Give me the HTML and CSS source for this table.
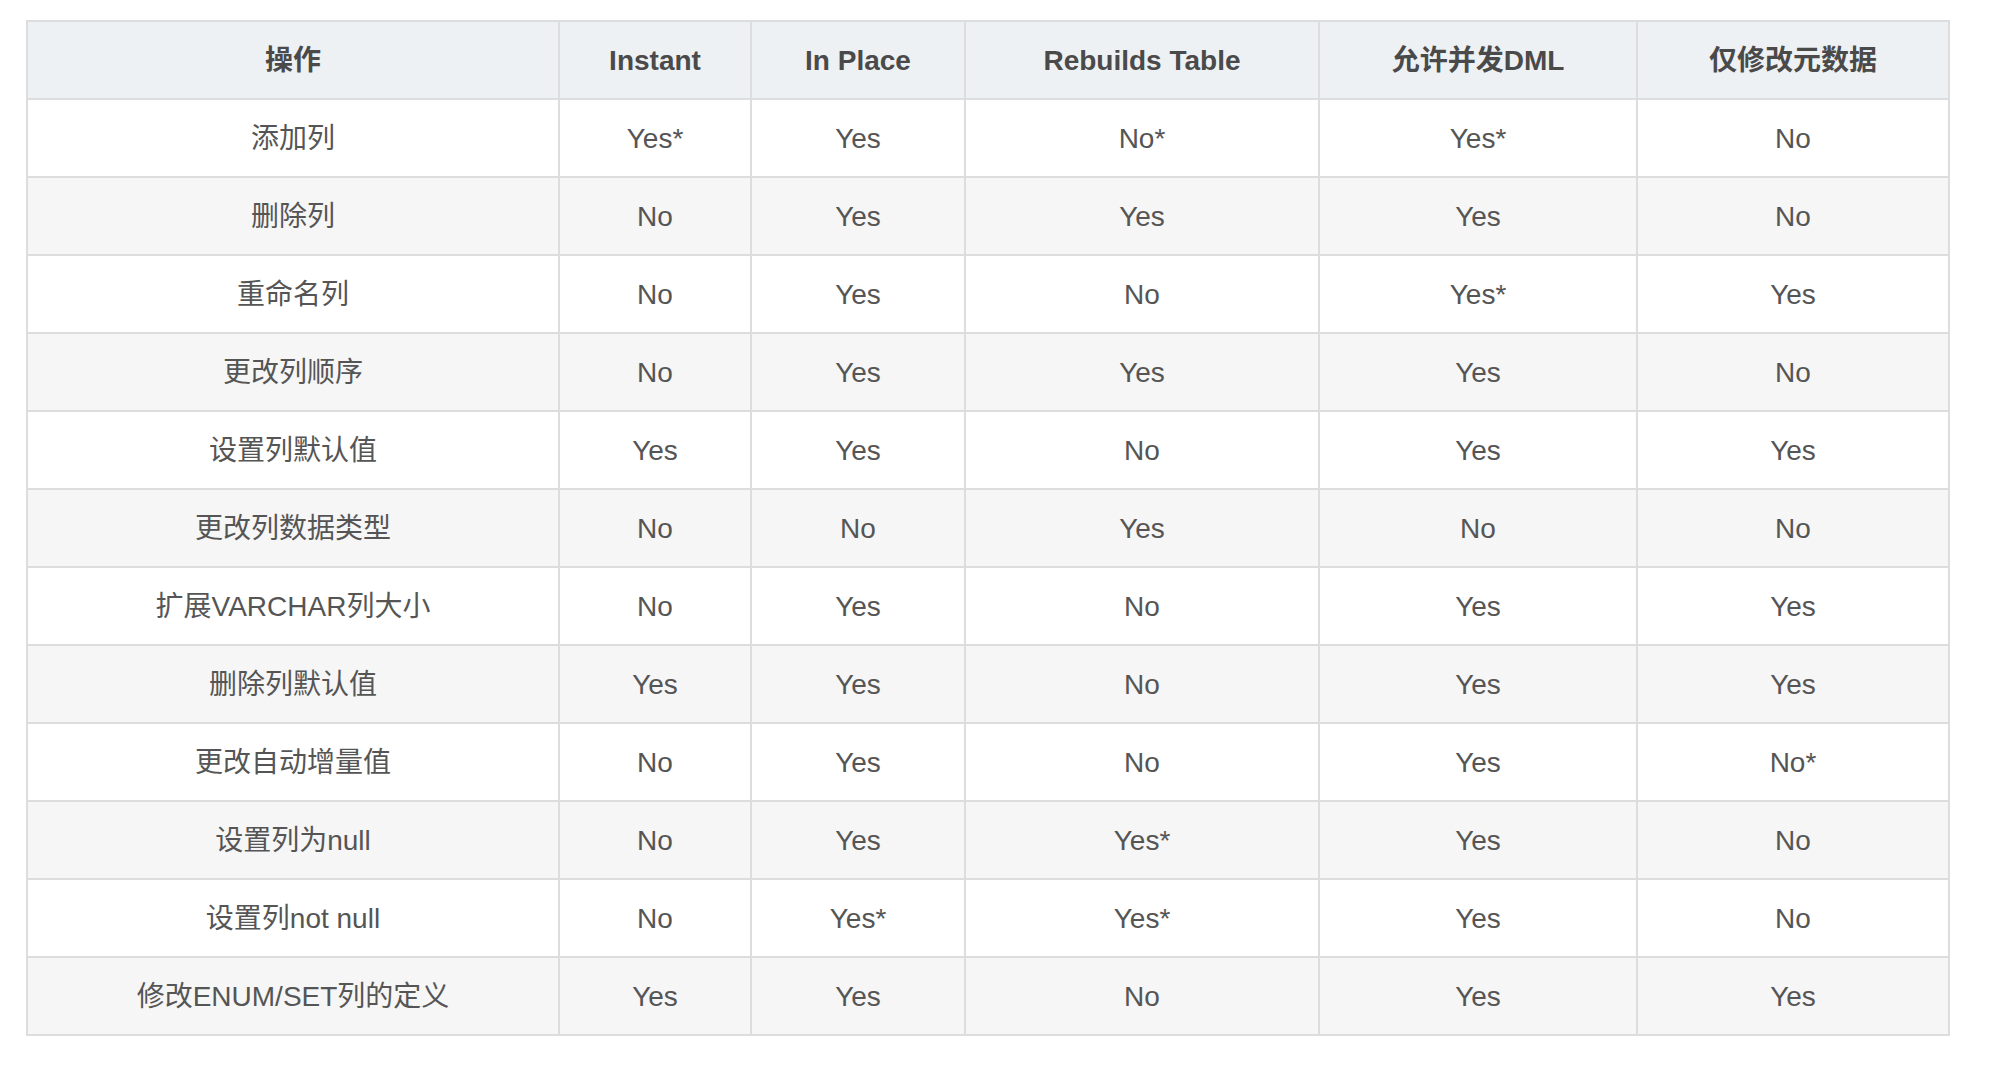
FILE: index.html
```html
<!DOCTYPE html>
<html lang="zh-CN">
<head>
<meta charset="utf-8">
<title>Online DDL</title>
<link rel="stylesheet" href="styles.css">
</head>
<body>
<div class="wrap">
<table class="ddl">
<thead>
<tr><th class="c1">操作</th><th class="c2">Instant</th><th class="c3">In Place</th><th class="c4">Rebuilds Table</th><th class="c5">允许并发DML</th><th class="c6">仅修改元数据</th></tr>
</thead>
<tbody>
<tr><td>添加列</td><td>Yes*</td><td>Yes</td><td>No*</td><td>Yes*</td><td>No</td></tr>
<tr><td>删除列</td><td>No</td><td>Yes</td><td>Yes</td><td>Yes</td><td>No</td></tr>
<tr><td>重命名列</td><td>No</td><td>Yes</td><td>No</td><td>Yes*</td><td>Yes</td></tr>
<tr><td>更改列顺序</td><td>No</td><td>Yes</td><td>Yes</td><td>Yes</td><td>No</td></tr>
<tr><td>设置列默认值</td><td>Yes</td><td>Yes</td><td>No</td><td>Yes</td><td>Yes</td></tr>
<tr><td>更改列数据类型</td><td>No</td><td>No</td><td>Yes</td><td>No</td><td>No</td></tr>
<tr><td>扩展VARCHAR列大小</td><td>No</td><td>Yes</td><td>No</td><td>Yes</td><td>Yes</td></tr>
<tr><td>删除列默认值</td><td>Yes</td><td>Yes</td><td>No</td><td>Yes</td><td>Yes</td></tr>
<tr><td>更改自动增量值</td><td>No</td><td>Yes</td><td>No</td><td>Yes</td><td>No*</td></tr>
<tr><td>设置列为null</td><td>No</td><td>Yes</td><td>Yes*</td><td>Yes</td><td>No</td></tr>
<tr><td>设置列not null</td><td>No</td><td>Yes*</td><td>Yes*</td><td>Yes</td><td>No</td></tr>
<tr><td>修改ENUM/SET列的定义</td><td>Yes</td><td>Yes</td><td>No</td><td>Yes</td><td>Yes</td></tr>
</tbody>
</table>
</div>
</body>
</html>
```

FILE: styles.css
```css
html, body {
  margin: 0;
  padding: 0;
  background: #ffffff;
}

.wrap {
  padding: 20px 44px 0 26px;
}

.ddl {
  border-collapse: separate;
  border-spacing: 0;
  table-layout: fixed;
  width: 1924px;
  border-left: 2px solid #dddddd;
  border-top: 2px solid #dddddd;
  font-family: "Liberation Sans", "Noto Sans CJK SC", sans-serif;
  font-size: 28px;
  color: #555555;
}

.ddl th,
.ddl td {
  box-sizing: border-box;
  padding: 2px 0 0 0;
  line-height: 74px;
  text-align: center;
  border-right: 2px solid #dddddd;
  border-bottom: 2px solid #dddddd;
  white-space: nowrap;
}

.ddl th {
  background: #eef1f4;
  font-weight: bold;
  color: #4a4a4a;
}

.ddl tbody tr:nth-child(even) td {
  background: #f6f6f6;
}

.c1 { width: 532px; }
.c2 { width: 192px; }
.c3 { width: 214px; }
.c4 { width: 354px; }
.c5 { width: 318px; }
.c6 { width: 312px; }
```
